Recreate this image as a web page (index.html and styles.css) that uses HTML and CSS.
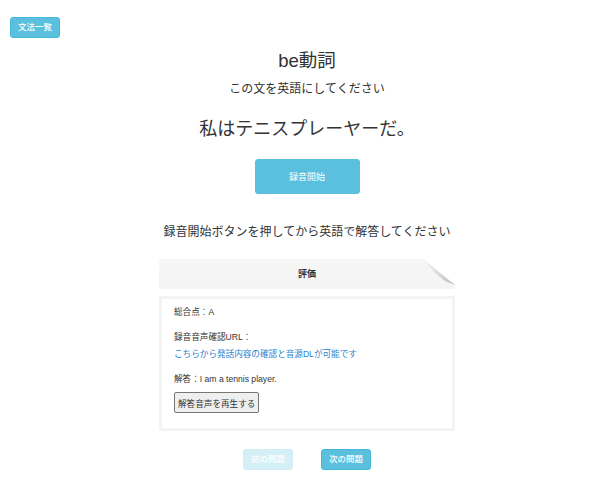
FILE: index.html
```html
<!DOCTYPE html>
<html lang="ja">
<head>
<meta charset="utf-8">
<link rel="stylesheet" href="styles.css">
</head>
<body>
<div class="topbar"><button class="btn btn-info btn-small">文法一覧</button></div>
<main class="main">
  <h1 class="title">be動詞</h1>
  <p class="subtitle">この文を英語にしてください</p>
  <p class="sentence">私はテニスプレーヤーだ。</p>
  <button class="btn btn-info btn-record">録音開始</button>
  <p class="instruction">録音開始ボタンを押してから英語で解答してください</p>
  <div class="eval-head">評価
    <svg class="fold" width="32" height="28" viewBox="0 0 32 28">
      <defs>
        <linearGradient id="g" x1="0" y1="0" x2="1" y2="1">
          <stop offset="0" stop-color="#f4f4f4"/>
          <stop offset="0.5" stop-color="#dcdcdc"/>
          <stop offset="1" stop-color="#b9b9b9"/>
        </linearGradient>
      </defs>
      <polygon points="0,0 32,0 32,26" fill="#ffffff"/>
      <polygon points="0,0 32,26 22,22 12,14" fill="url(#g)"/>
    </svg>
  </div>
  <div class="card">
    <p class="line">総合点：A</p>
    <p class="line gap">録音音声確認URL：</p>
    <p class="line link-line"><a class="link" href="#">こちらから発話内容の確認と音源DLが可能です</a></p>
    <p class="line gap">解答：I am a tennis player.</p>
    <button class="play">解答音声を再生する</button>
  </div>
  <div class="pager">
    <button class="btn btn-info btn-small disabled">前の問題</button>
    <button class="btn btn-info btn-small">次の問題</button>
  </div>
</main>
</body>
</html>
```
FILE: styles.css
```css
* { box-sizing: border-box; }
html, body { margin: 0; padding: 0; background: #fff; }
body {
  font-family: "Liberation Sans", "Noto Sans CJK JP", sans-serif;
  color: #333;
  width: 600px;
  height: 481px;
  overflow: hidden;
}
p, h1 { margin: 0; }
.topbar { padding: 16px 0 0 10px; height: 37px; }
.btn {
  font-family: "Liberation Sans", "Noto Sans CJK JP", sans-serif;
  border: 1px solid #46b8da;
  background: #5bc0de;
  color: #fff;
  border-radius: 3px;
  padding: 0;
  cursor: pointer;
}
.btn-small {
  width: 50px;
  height: 21px;
  font-size: 8.5px;
  font-weight: 500;
  line-height: 19px;
}
.main {
  padding-left: 14px;
  display: flex;
  flex-direction: column;
  align-items: center;
}
.title {
  font-size: 18.5px;
  font-weight: normal;
  line-height: 24px;
  margin-top: 12px;
}
.subtitle {
  font-size: 12px;
  line-height: 18px;
  margin-top: 7px;
}
.sentence {
  font-size: 18px;
  line-height: 28px;
  margin-top: 17px;
}
.btn-record {
  width: 105px;
  height: 35px;
  font-size: 9px;
  margin-top: 16px;
  border-color: #5bc0de;
}
.instruction {
  font-size: 12px;
  line-height: 20px;
  margin-top: 28px;
}
.eval-head {
  position: relative;
  width: 296px;
  height: 30px;
  margin-top: 17px;
  background: linear-gradient(#f7f7f7, #f3f3f3);
  border-radius: 2px;
  font-size: 9px;
  font-weight: bold;
  line-height: 30px;
  text-align: center;
  color: #333;
}
.fold { position: absolute; right: 0; top: 0; }
.card {
  width: 296px;
  height: 135px;
  margin-top: 7px;
  border: 3px solid #f3f3f3;
  border-radius: 2px;
  padding: 6px 0 0 12px;
}
.line { font-size: 8.6px; line-height: 14px; color: #333; }
.gap { margin-top: 11px; }
.link-line { margin-top: 3px; }
.link { color: #2a83cf; text-decoration: none; }
.play {
  margin-top: 6px;
  height: 21px;
  padding: 0 3px;
  font-family: "Liberation Sans", "Noto Sans CJK JP", sans-serif;
  font-size: 8.6px;
  color: #333;
  background: #efefef;
  border: 1px solid #767676;
  border-radius: 2px;
  white-space: nowrap;
}
.pager {
  display: flex;
  gap: 28px;
  margin-top: 18px;
}
.disabled { opacity: 0.25; }
```
